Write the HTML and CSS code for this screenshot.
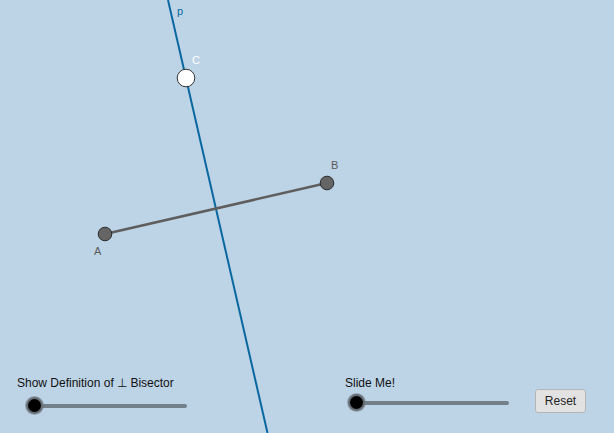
FILE: index.html
```html
<!DOCTYPE html>
<html>
<head>
<meta charset="utf-8">
<link rel="stylesheet" href="styles.css">
</head>
<body>
<div class="applet">
  <svg class="geo" width="614" height="433" viewBox="0 0 614 433">
    <line x1="168" y1="0" x2="267.5" y2="433" stroke="#0a68a0" stroke-width="2"/>
    <line x1="105" y1="234" x2="327" y2="183" stroke="#5e5e5e" stroke-width="2.6"/>
    <circle cx="105" cy="234" r="6.8" fill="#656565" stroke="#2a2a2a" stroke-width="1"/>
    <circle cx="327" cy="183" r="6.8" fill="#656565" stroke="#2a2a2a" stroke-width="1"/>
    <circle cx="186" cy="78" r="8.8" fill="#ffffff" stroke="#333" stroke-width="1"/>
    <text x="177" y="15" class="lbl lp">p</text>
    <text x="192" y="64" class="lbl lc">C</text>
    <text x="331" y="169" class="lbl lg">B</text>
    <text x="94" y="255" class="lbl lg">A</text>
  </svg>

  <div class="slider s1">
    <div class="slabel">Show Definition of ⊥ Bisector</div>
    <div class="track"><span class="knob"></span></div>
  </div>

  <div class="slider s2">
    <div class="slabel">Slide Me!</div>
    <div class="track"><span class="knob"></span></div>
  </div>

  <button class="reset">Reset</button>
</div>
</body>
</html>
```
FILE: styles.css
```css
html, body {
  margin: 0;
  padding: 0;
  background: #bdd4e7;
}
.applet {
  position: relative;
  width: 614px;
  height: 433px;
  overflow: hidden;
  background: #bdd4e7;
  font-family: "Liberation Sans", Arial, sans-serif;
}
.geo {
  position: absolute;
  left: 0;
  top: 0;
}
.lbl {
  font-family: "Liberation Sans", Arial, sans-serif;
  font-size: 11px;
}
.lp { fill: #0a68a0; }
.lc { fill: #ffffff; }
.lg { fill: #5a5a5a; }
.slider {
  position: absolute;
}
.s1 { left: 17px; top: 376px; }
.s2 { left: 345px; top: 376px; }
.slabel {
  font-size: 12px;
  color: #111;
  line-height: 15px;
  white-space: nowrap;
}
.track {
  position: relative;
  height: 4px;
  border-radius: 2px;
  background: #737f89;
}
.s1 .track { margin: 13px 0 0 17px; width: 153px; }
.s2 .track { margin: 10px 0 0 11px; width: 153px; }
.knob {
  position: absolute;
  left: -8px;
  top: -7px;
  width: 13px;
  height: 13px;
  border-radius: 50%;
  background: #000;
  border: 2px solid #666d74;
  box-shadow: 0 0 0 1px rgba(110,118,126,0.5);
}
.reset {
  position: absolute;
  left: 535px;
  top: 389px;
  width: 51px;
  height: 24px;
  padding: 0;
  background: #e2e2e2;
  border: 1px solid #b5b5b5;
  border-radius: 3px;
  font-family: "Liberation Sans", Arial, sans-serif;
  font-size: 12px;
  color: #222;
}
```
